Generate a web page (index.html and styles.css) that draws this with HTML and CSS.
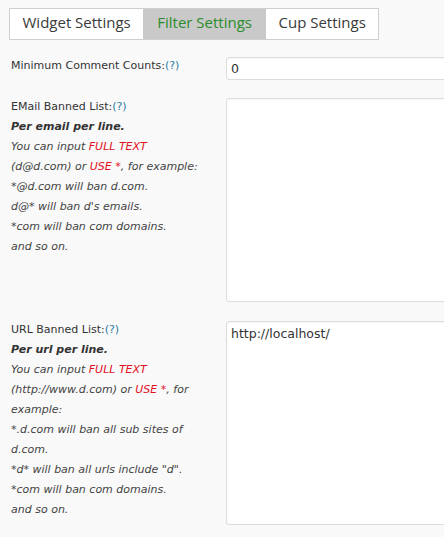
FILE: index.html
```html
<!DOCTYPE html>
<html>
<head>
<meta charset="utf-8">
<link rel="stylesheet" href="styles.css">
</head>
<body>
<div class="tabs">
  <span class="tab">Widget Settings</span>
  <span class="tab active">Filter Settings</span>
  <span class="tab">Cup Settings</span>
</div>
<div class="form">
  <div class="label">Minimum Comment Counts:<a class="help">(?)</a></div>
  <div class="field"><input class="text" type="text" value="0"></div>

  <div class="label">EMail Banned List:<a class="help">(?)</a>
    <div class="desc"><b>Per email per line.</b><br>You can input <span class="red">FULL TEXT</span> (d@d.com) or <span class="red">USE *</span>, for example:<br>*@d.com will ban d.com.<br>d@* will ban d's emails.<br>*com will ban com domains.<br>and so on.</div>
  </div>
  <div class="field"><textarea class="area"></textarea></div>

  <div class="label">URL Banned List:<a class="help">(?)</a>
    <div class="desc"><b>Per url per line.</b><br>You can input <span class="red">FULL TEXT</span> (http://www.d.com) or <span class="red">USE *</span>, for example:<br>*.d.com will ban all sub sites of d.com.<br>*d* will ban all urls include "d".<br>*com will ban com domains.<br>and so on.</div>
  </div>
  <div class="field"><textarea class="area">http://localhost/</textarea></div>
</div>
</body>
</html>
```
FILE: styles.css
```css
html, body {
  margin: 0;
  padding: 0;
  background: #f9f9f9;
  overflow: hidden;
}
body {
  font-family: "DejaVu Sans", Verdana, sans-serif;
  color: #333;
}
.tabs {
  display: inline-flex;
  margin: 8px 0 0 9px;
  border: 1px solid #cfcfcf;
  background: #fff;
}
.tab {
  font-family: "Open Sans", sans-serif;
  font-size: 15px;
  line-height: 26px;
  height: 30px;
  box-sizing: border-box;
  padding: 0 12.5px 4px;
  color: #3a3a3a;
  background: #fff;
}
.tab.active {
  background: #c9c9c9;
  color: #2b8c2b;
  padding: 0 14px 4px;
}
.form {
  display: grid;
  grid-template-columns: 196px 260px;
  column-gap: 19px;
  row-gap: 17px;
  margin: 16px 0 0 11px;
}
.label {
  font-size: 11px;
  line-height: 20px;
  color: #333;
}
.help {
  color: #2a7ba5;
}
.desc {
  font-style: italic;
  color: #444;
}
.desc b {
  font-weight: bold;
  color: #333;
}
.red {
  color: #e0101e;
}
.field {
  padding-top: 1px;
}
.text, .area {
  display: block;
  box-sizing: border-box;
  width: 260px;
  margin: 0;
  border: 1px solid #dcdcdc;
  border-radius: 3px;
  background: #fff;
  font-family: "DejaVu Sans", Verdana, sans-serif;
  font-size: 12.5px;
  color: #333;
  box-shadow: inset 0 1px 2px rgba(0,0,0,0.04);
  outline: none;
}
.text {
  height: 23px;
  padding: 0 4px;
}
.area {
  height: 204px;
  padding: 3px 4px;
  line-height: 17px;
  resize: none;
  margin-bottom: 1px;
}
```
